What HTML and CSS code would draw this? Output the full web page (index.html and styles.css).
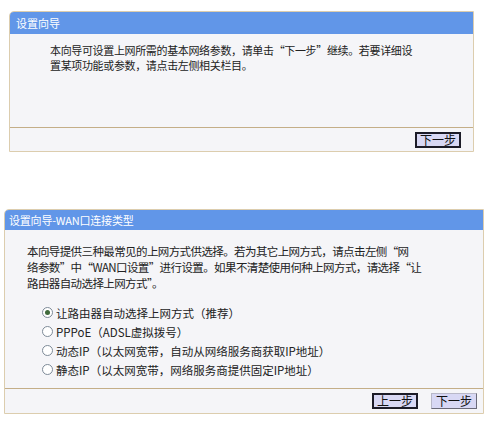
FILE: index.html
```html
<!DOCTYPE html>
<html lang="zh-CN">
<head>
  <meta charset="UTF-8" />
  <title>设置向导</title>
  <link rel="stylesheet" href="styles.css">
</head>
<body>
  <div class="panel panel-intro">
    <div class="panel-head">设置向导</div>
    <div class="panel-body">
      <p class="desc">本向导可设置上网所需的基本网络参数，请单击“下一步”继续。若要详细设<br>置某项功能或参数，请点击左侧相关栏目。</p>
    </div>
    <div class="panel-foot">
      <button class="btn btn-focus">下一步</button>
    </div>
  </div>

  <div class="panel panel-wan">
    <div class="panel-head">设置向导-WAN口连接类型</div>
    <div class="panel-body">
      <p class="desc">本向导提供三种最常见的上网方式供选择。若为其它上网方式，请点击左侧“网<br>络参数”中“WAN口设置”进行设置。如果不清楚使用何种上网方式，请选择“让<br>路由器自动选择上网方式”。</p>
      <ul class="options">
        <li><span class="radio checked"></span>让路由器自动选择上网方式（推荐）</li>
        <li><span class="radio"></span>PPPoE（ADSL虚拟拨号）</li>
        <li><span class="radio"></span>动态IP（以太网宽带，自动从网络服务商获取IP地址）</li>
        <li><span class="radio"></span>静态IP（以太网宽带，网络服务商提供固定IP地址）</li>
      </ul>
    </div>
    <div class="panel-foot">
      <button class="btn btn-focus">上一步</button>
      <button class="btn">下一步</button>
    </div>
  </div>
</body>
</html>
```

FILE: styles.css
```css
body, html {
  margin: 0;
  padding: 0;
  background-color: #fff;
  color: #222;
  font-family: "Noto Sans CJK SC", "Liberation Sans", sans-serif;
}
body {
  padding-top: 11px;
}
.panel {
  border: 1px solid #dccdae;
  border-top-left-radius: 5px;
  background-color: #f5f5f8;
}
.panel-intro {
  margin-left: 9px;
  width: 463px;
}
.panel-wan {
  margin-top: 57px;
  margin-left: 4px;
  width: 478px;
}
.panel-head {
  background-color: #6196e8;
  color: #fff;
  font-size: 11px;
  line-height: 22px;
  padding-left: 6px;
  border-top-left-radius: 4px;
}
.panel-wan .panel-head {
  line-height: 20px;
  padding-left: 4px;
  letter-spacing: -0.2px;
}
.panel-body {
  border-bottom: 1px solid #c4ae88;
}
.panel-intro .panel-body {
  height: 93px;
  padding-left: 40px;
}
.panel-wan .panel-body {
  height: 158px;
  padding-left: 22px;
}
.desc {
  margin: 0;
  font-size: 11px;
}
.panel-intro .desc {
  padding-top: 9px;
  line-height: 15px;
  letter-spacing: -0.35px;
}
.panel-wan .desc {
  padding-top: 13px;
  font-size: 11.5px;
  letter-spacing: -0.6px;
  line-height: 16px;
}
.options {
  list-style: none;
  margin: 12px 0 0 0;
  padding: 0 0 0 15px;
  font-size: 11.5px;
}
.options li {
  display: flex;
  align-items: center;
  height: 19px;
}
.radio {
  width: 9px;
  height: 9px;
  border: 1px solid #7d8a98;
  border-radius: 50%;
  background-color: #fff;
  margin-right: 3px;
  display: flex;
  align-items: center;
  justify-content: center;
}
.radio.checked::after {
  content: "";
  width: 5px;
  height: 5px;
  border-radius: 50%;
  background-color: #3f6a3a;
}
.panel-foot {
  display: flex;
  justify-content: flex-end;
  align-items: center;
  gap: 13px;
}
.panel-intro .panel-foot {
  height: 23px;
  padding-right: 12px;
}
.panel-wan .panel-foot {
  height: 24px;
  padding-right: 6px;
}
.btn {
  width: 46px;
  height: 16px;
  padding: 0;
  font-family: "Noto Sans CJK SC", sans-serif;
  font-size: 12px;
  line-height: 12px;
  color: #111;
  background-color: #d8d8f4;
  border: 1px solid #6a6a78;
  border-top-color: #b8b8c8;
  border-left-color: #b8b8c8;
}
.btn-focus {
  border: 2px solid #1c1c28;
}
```
